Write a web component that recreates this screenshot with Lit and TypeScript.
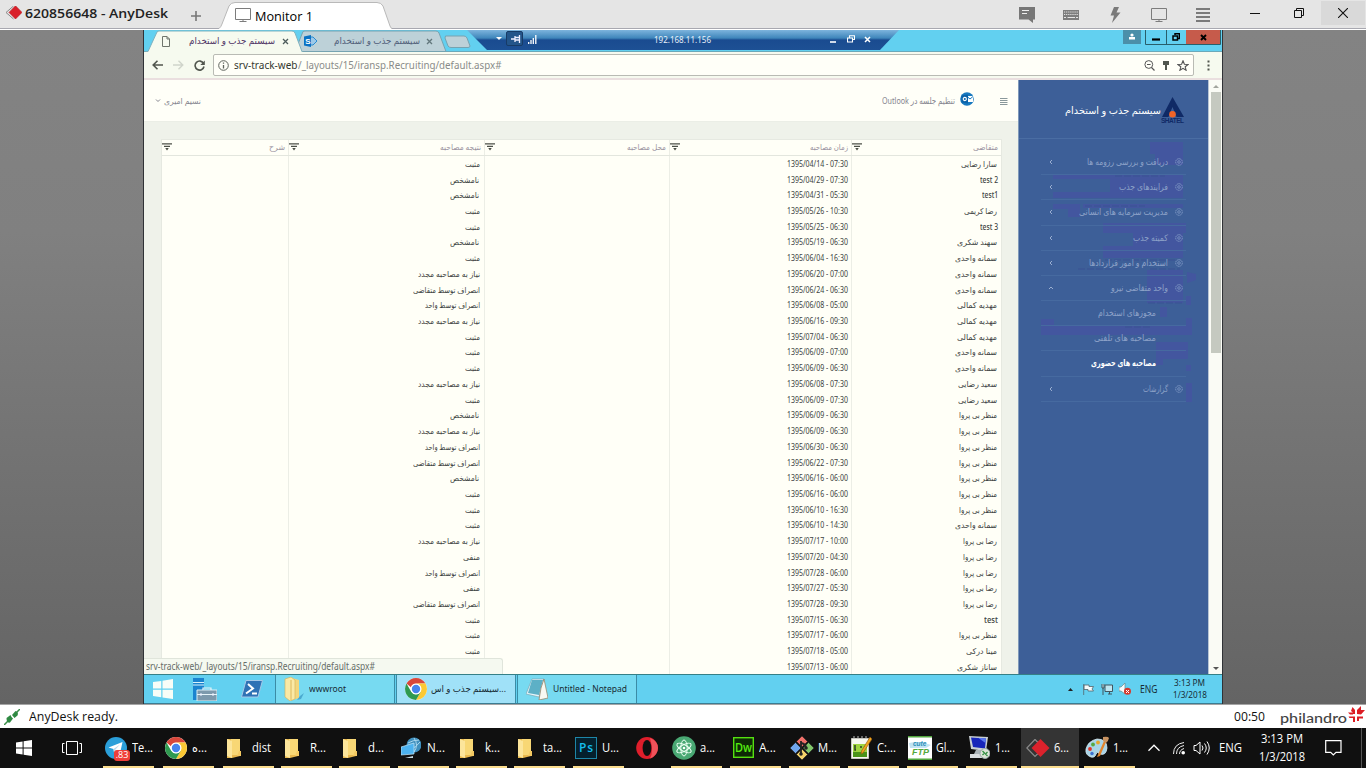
import { LitElement, html, css, svg, nothing } from "lit";
import { customElement, property } from "lit/decorators.js";
import { styleMap } from "lit/directives/style-map.js";

/** One line of text condensed or stretched to a given width. */
@customElement("fit-text")
class FitText extends LitElement {
  @property() t = "";
  @property({ type: Number }) w = 10;
  @property({ type: Boolean }) rtl = false;
  static styles = css`
    :host { display: block; direction: ltr; white-space: nowrap; flex: none; }
    .box { display: block; }
    .run { display: inline-block; transform-origin: 0 50%; white-space: pre; }
  `;
  render() {
    return html`<span class="box" style=${styleMap({ width: `${this.w}px` })}><span class="run" dir=${this.rtl ? "rtl" : "ltr"}>${this.t}</span></span>`;
  }
  updated() {
    const run = this.renderRoot.querySelector<HTMLElement>(".run")!;
    run.style.transform = "none";
    const n = run.getBoundingClientRect().width;
    if (n) run.style.transform = `scaleX(${this.w / n})`;
  }
}

const fit = (t: string, w: number, cls = "", rtl = false) =>
  html`<fit-text class=${cls} .t=${t} .w=${w} .rtl=${rtl}></fit-text>`;
const fa = (t: string, w: number, cls = "") => fit(t, w, cls, true);
const ico = (w: number, h: number, body: unknown, cls = "") =>
  html`<svg class=${cls} width=${w} height=${h} viewBox="0 0 ${w} ${h}">${body}</svg>`;

const chrome = svg`
  <circle cx="11" cy="11" r="11" fill="#fff"/>
  <path d="M1.5 5.5A11 11 0 0 1 20.5 5.5H11A5.5 5.5 0 0 0 5.9 9.2Z" fill="#d8473b"/>
  <path d="M20.5 5.5A11 11 0 0 1 11 22L15.8 13.6A5.5 5.5 0 0 0 11 5.5Z" fill="#fbc934"/>
  <path d="M1.5 5.5A11 11 0 0 0 11 22L15.8 13.7A5.5 5.5 0 0 1 6.2 13.7Z" fill="#2f9a50"/>
  <circle cx="11" cy="11" r="5.2" fill="#fff"/><circle cx="11" cy="11" r="4.2" fill="#4684ee"/>`;
const windows = svg`<path d="M0 2.4L6.6 1.5V7.5H0ZM7.6 1.3L16 0V7.5H7.6ZM0 8.5H6.6V14.5L0 13.6ZM7.6 8.5H16V16L7.6 14.7Z" fill="currentColor"/>`;
const folder = svg`<path d="M0 1H13V18L5 20H0Z" fill="#e9b84d"/><path d="M4 1H13V17H4Z" fill="#f8d775"/><path d="M0 1L5 3V20L0 18Z" fill="#fce59b"/><path d="M12 13h2v5h-4z" fill="#f4c962"/>`;
const funnel = ico(10, 8, svg`<path d="M0 .8H10M2 3.3H8M3.7 5.5H6.3" stroke="#4c5048" stroke-width="1.2"/><path d="M3.5 5.5H6.5L5 7.5Z" fill="#4c5048"/>`);
const diamond = svg`<path d="M8.5 1L1 7.5L8.5 14" fill="none" stroke="#8a8a8a"/><path d="M10.5 .8L17 7.4L10.5 14L4 7.4Z" fill="#d9202a" stroke="#b8151e" stroke-width=".6"/>`;
const monitor = svg`<path d="M.5 .5H15.5V11.5H.5ZM8 11.5V13.5M4.5 13.5H11.5" fill="none" stroke="#7c7c7c"/>`;

type Row = [string, string, string];
const P = "مثبت", U = "نامشخص", N = "نیاز به مصاحبه مجدد", Q = "انصراف توسط متقاضی", V = "انصراف توسط واحد", M = "منفی";
const A = "سمانه واحدی", B = "مهدیه کمالی", C = "سعید رضایی", D = "منظر بی پروا", E = "رضا بی پروا";
const ROWS: Row[] = [
  ["سارا رضایی", "04/14 - 07:30", P], ["test 2", "04/29 - 07:30", U], ["test1", "04/31 - 05:30", U],
  ["رضا کریمی", "05/26 - 10:30", P], ["test 3", "05/25 - 06:30", P], ["سهند شکری", "05/19 - 06:30", U],
  [A, "06/04 - 16:30", P], [A, "06/20 - 07:00", N], [A, "06/24 - 06:30", Q], [B, "06/08 - 05:00", V],
  [B, "06/16 - 09:30", N], [B, "07/04 - 06:30", P], [A, "06/09 - 07:00", P], [A, "06/09 - 06:30", P],
  [C, "06/08 - 07:30", N], [C, "06/09 - 07:30", P], [D, "06/09 - 06:30", U], [D, "06/09 - 06:30", N],
  [D, "06/30 - 06:30", V], [D, "06/22 - 07:30", Q], [D, "06/16 - 06:00", U], [D, "06/16 - 06:00", P],
  [D, "06/10 - 16:30", P], [A, "06/10 - 14:30", P], [E, "07/17 - 10:00", N], [E, "07/20 - 04:30", M],
  [E, "07/28 - 06:00", V], [E, "07/27 - 05:30", M], [E, "07/28 - 09:30", Q], ["test", "07/15 - 06:30", P],
  [D, "07/17 - 06:00", P], ["مینا درکی", "07/18 - 05:00", P], ["ساناز شکری", "07/13 - 06:00", ""],
];
const WIDTHS: Record<string, number> = {
  [P]: 15, [U]: 29, [N]: 62, [Q]: 67, [V]: 55, [M]: 17, [A]: 42, [B]: 40, [C]: 39, [D]: 38, [E]: 34,
  "سارا رضایی": 36, "test 2": 18, test1: 16, "رضا کریمی": 33, "test 3": 18, "سهند شکری": 40, test: 14,
  "مینا درکی": 31, "ساناز شکری": 40,
};
const MENU: { t: string; w: number; k?: string }[] = [
  { t: "دریافت و بررسی رزومه ها", w: 81 }, { t: "فرایندهای جذب", w: 49 }, { t: "مدیریت سرمایه های انسانی", w: 89 },
  { t: "کمیته جذب", w: 35 }, { t: "استخدام و امور قراردادها", w: 79 }, { t: "واحد متقاضی نیرو", w: 57, k: "open" },
  { t: "مجوزهای استخدام", w: 58, k: "sub" }, { t: "مصاحبه های تلفنی", w: 62, k: "sub" },
  { t: "مصاحبه های حضوری", w: 65, k: "sub on" }, { t: "گزارشات", w: 25 },
];

/** The recruiting site shown inside the remote browser. */
@customElement("recruit-page")
class RecruitPage extends LitElement {
  static styles = css`
    :host { display: grid; grid-template-columns: 874px 191px 13px; height: 594px; overflow: hidden; background: #eff2ea; font: 8px/12px "Noto Sans", "DejaVu Sans", sans-serif; }
    svg { display: block; flex: none; }
    .top { display: grid; grid-template-columns: 11px 9px 1fr; align-items: center; height: 42px; background: #fffff8; color: #85858f; border-bottom: 1px solid #ebeee6; box-sizing: border-box; }
    .main { min-width: 0; overflow: hidden; }
    .table { margin: 17px 0 0 17px; width: 841px; background: #fffff7; border: 1px solid #e6e9e1; box-sizing: border-box; }
    .row { display: grid; grid-template-columns: 127px 196px 185px 182px 1fr; height: 15.73px; color: #3c3f41; }
    .head { height: 16px; color: #9a93a0; border-bottom: 1px solid #e3e6de; box-sizing: border-box; }
    .cell { display: flex; align-items: center; justify-content: flex-end; border-right: 1px solid #eceee6; padding: 0 4px 0 0; }
    .cell:last-child { border-right: 0; }
    .cell .date, .cell .lat { margin-right: -1px; }
    .lat { font-weight: 500; }
    .head .cell { justify-content: space-between; padding: 0 3px 1px 0; }
    .u { margin-right: 1px; }
    .side { background: #3d5f98; border-left: 1px solid #7f99ba; border-right: 1px solid #b8c5d4; box-sizing: border-box; color: #8da2c8; position: relative; overflow: hidden; }
    .noise { position: absolute; inset: 0; }
    .brand { display: flex; height: 59px; border-bottom: 1px solid #4a6da3; box-sizing: border-box; padding: 17px 0 0 46px; color: #fff; font-size: 10px; position: relative; }
    .brandname { padding-top: 7px; line-height: 13px; font-weight: 500; }
    .menu { padding: 11px 22px 0 22px; position: relative; }
    .item { display: grid; grid-template-columns: 20px 1fr 18px; align-items: center; height: 25.18px; border-bottom: 1px solid #466aa0; box-sizing: border-box; font-size: 9px; }
    .item svg { justify-self: end; margin-right: 3px; }
    .item svg.chev { justify-self: center; margin-right: 0; }
    .lab { justify-self: end; }
    .sub { grid-template-columns: 20px 1fr 30px; }
    .sub.on { color: #fff; font-weight: 700; }
    .scroll { background: #fafbf5; display: flex; flex-direction: column; align-items: center; justify-content: space-between; padding: 4px 0 3px; box-sizing: border-box; }
    .thumb { width: 10px; height: 261px; background: #c5c9c0; margin-top: 4px; }
    .upper { display: flex; flex-direction: column; align-items: center; }
  `;
  private head(t: string, w: number) {
    return html`<div class="cell">${funnel}${fa(t, w)}</div>`;
  }
  render() {
    const gear = ico(8, 8, svg`<circle cx="4" cy="4" r="3.3" fill="none" stroke="#7f98c4" stroke-width="1" stroke-dasharray="1.6 .6"/><circle cx="4" cy="4" r="1.3" fill="none" stroke="#7f98c4" stroke-width=".8"/>`);
    return html`
      <div class="main">
        <div class="top">
          <i></i>${ico(6, 5, svg`<path d="M1 1.5L3 3.5L5 1.5" fill="none" stroke="#85858f"/>`)}
          ${fa("نسیم امیری", 37)}
        </div>
        <div class="table">
          <div class="row head">
            ${this.head("شرح", 16)}${this.head("نتیجه مصاحبه", 41)}${this.head("محل مصاحبه", 39)}${this.head("زمان مصاحبه", 38)}${this.head("متقاضی", 25)}
          </div>
          ${ROWS.map(([n, d, r]) => html`<div class="row">
            <div class="cell"></div>
            <div class="cell">${r ? fa(r, WIDTHS[r], r === U ? "u" : "") : nothing}</div>
            <div class="cell"></div>
            <div class="cell">${fit(`1395/${d}`, 61, "date")}</div>
            <div class="cell">${n.startsWith("test") ? fit(n, WIDTHS[n], "lat") : fa(n, WIDTHS[n])}</div>
          </div>`)}
        </div>
      </div>
      <div class="side">
        <svg class="noise" width="189" height="594" viewBox="1019 80 189 594" fill="#43569f">
          <path d="M1150 142h33v23h-28v-11h-5ZM1053 174h130v5h-130ZM1110 179h73v13h-73ZM1053 192h130v6h-130ZM1053 204h27v13h-12v-8h-15ZM1083 204h100v4h-100ZM1103 223h83v10h-83ZM1133 233h50v13h-50ZM1103 246h80v12h-80ZM1147 270h36v33h-36ZM1187 272l9 2v6l-9 3ZM1186 296h5v9h-5ZM1160 307h7v10h-7ZM1041 319h13v6h138v10h-151ZM1186 318h6v7h-6ZM1156 342h32v17h-25v6h-7ZM1186 365h5v6h-5ZM1186 383h6v19h-6Z"/>
          <path d="M1115 176h50M1150 269h30M1148 303h35M1125 327h25M1078 269h50M1085 206h60M1105 260h70" stroke="#3b5293" stroke-dasharray="7 2"/>
        </svg>
        <div class="brand">
          ${fa("سیستم جذب و استخدام", 96, "brandname")}
          ${ico(24, 28, svg`<path d="M11.5 0L23 20H15.5L11.5 10L7.5 20H1Z" fill="#102a66"/><circle cx="11.5" cy="17.3" r="3.3" fill="#f06428"/><text x="0" y="26.3" font-family="Liberation Sans" font-weight="700" font-size="6.5" textLength="23" fill="#102a66">SHATEL</text>`)}
        </div>
        <div class="menu">
          ${MENU.map((m) => html`<div class="item ${m.k ?? ""}">
            ${m.k?.startsWith("sub") ? html`<i></i>` : ico(6, 6, m.k ? svg`<path d="M1 4L3 2L5 4" fill="none" stroke="#9aaed0"/>` : svg`<path d="M4 1L2 3L4 5" fill="none" stroke="#9aaed0"/>`, "chev")}
            ${fa(m.t, m.w, "lab")}
            ${m.k?.startsWith("sub") ? nothing : gear}
          </div>`)}
        </div>
      </div>
      <div class="scroll">
        <div class="upper">${ico(6, 4, svg`<path d="M0 4L3 1L6 4Z" fill="#a2a59e"/>`)}<div class="thumb"></div></div>
        ${ico(6, 4, svg`<path d="M0 0L3 3L6 0Z" fill="#555"/>`)}
      </div>`;
  }
}

/** Header shortcut of the site: the meeting link, Outlook badge and menu toggle. */
@customElement("meeting-link")
class MeetingLink extends LitElement {
  static styles = css`
    :host { display: flex; align-items: center; height: 41px; color: #85858f; font: 9px/12px "Noto Sans", "DejaVu Sans", sans-serif; }
    svg { flex: none; }
    .b { margin: -4px 26px 0 5px; }
  `;
  render() {
    return html`${fa("تنظیم جلسه در Outlook", 73)}
      ${ico(14, 14, svg`<circle cx="7" cy="7" r="6.8" fill="#1879bf"/><path d="M7 4h6v6H7Z" fill="#fff"/><path d="M7 4.5l3 2.5l3-2.5" fill="none" stroke="#1879bf"/><path d="M1.5 3.5L8 2.5V11.5L1.5 10.5Z" fill="#0b62a8"/><circle cx="4.8" cy="7" r="1.6" fill="none" stroke="#fff" stroke-width="1.1"/>`, "b")}
      ${ico(8, 8, svg`<path d="M0 1.5H7.500M0 3.500H7.500M0 5.500H7.500M0 7.500H7.500" stroke="#7d8c90" stroke-width=".9"/>`)}`;
  }
}

/** The remote machine: browser window plus its own taskbar. */
@customElement("remote-desktop")
class RemoteDesktop extends LitElement {
  static styles = css`
    :host { display: block; width: 1078px; height: 674px; font: 9px/14px "Noto Sans", "DejaVu Sans", sans-serif; overflow: hidden; position: relative; }
    svg { display: block; flex: none; }
    .strip { height: 22px; background: #62d0f0; position: relative; }
    .shapes { position: absolute; inset: 0; }
    .tabs { display: grid; position: relative; height: 22px; align-items: center; grid-template-columns: 18px 27px 86px 7px 22px 30px 86px 6px 64px 17px 17px 17px 113px 57px 113px 18px 18px 15px 247px 19px 4px 21px 20px 34px; }
    .tabs .c { justify-self: center; }
    .tabs .r { justify-self: center; margin-bottom: 4px; }
    .tabs .h { justify-self: center; margin-bottom: 8px; }
    .tabs .a { color: #4f3566; }
    .tabs .b { color: #51607a; }
    .tabs .ip { color: #e8f0fa; margin-bottom: 3px; }
    .tools { height: 28px; background: #f6faef; display: grid; grid-template-columns: 8px 21px 21px 19px 981px 28px; align-items: center; border-bottom: 2px solid #eadfdf; box-sizing: border-box; }
    .omni { height: 22px; border: 1px solid #b9bbb4; border-radius: 2px; background: #fffff8; display: flex; align-items: center; box-sizing: border-box; padding: 0 4px; color: #898b88; font-size: 11.5px; line-height: 18px; }
    .omni .host { color: #33372f; margin-left: 5px; }
    .sp { flex: 1; }
    .omni svg + svg { margin-left: 6px; }
    .tools > svg { justify-self: center; }
    .tools > .back { justify-self: start; }
    .bar { display: grid; grid-template-columns: 38px 46px 47px 120px 1px 120px 1px 120px 1fr 26px 11px 7px 11px 7px 12px 9px 18px 15px 33px 16px; align-items: center; height: 30px; background: #62d0f0; border-top: 1px solid #357f86; border-bottom: 1px solid #3b7c92; box-sizing: border-box; color: #172c35; }
    .bar > svg { justify-self: center; }
    .btn { height: 28px; border: 1px solid #3b8ca6; border-width: 0 1px; background: #77daf1; display: flex; align-items: center; box-sizing: border-box; padding-left: 8px; gap: 5px; }
    .btn.on { background: #a0e1f8; gap: 4px; }
    .when { display: flex; flex-direction: column; align-items: center; line-height: 12px; font-size: 9.5px; }
    .eng { font-size: 10px; }
    .tip { position: absolute; left: 0; bottom: 30px; width: 359px; height: 16px; background: #f5f9f0; border: 1px solid #e0e5db; border-width: 1px 1px 0 0; border-radius: 0 3px 0 0; box-sizing: border-box; padding-left: 2px; color: #666d68; font-size: 10px; line-height: 15px; }
    .meet { position: absolute; top: 50px; left: 738px; }
  `;
  render() {
    const x = (c: string) => ico(7, 7, svg`<path d="M1 1L6 6M6 1L1 6" stroke=${c} stroke-width="1.3"/>`);
    const e = html`<i></i>`;
    return html`
      <div class="strip">
        <svg class="shapes" width="1078" height="22" viewBox="144 30 1078 22">
          <defs><linearGradient id="r" x1="0" y1="0" x2="0" y2="1"><stop offset="0" stop-color="#7db4dd"/><stop offset=".4" stop-color="#3f86bb"/><stop offset=".5" stop-color="#1a4b90"/><stop offset="1" stop-color="#1d5094"/></linearGradient></defs>
          <path d="M144 51.5H1222" stroke="#6ba9ba"/>
          <path d="M295 51.5L303 31.5Q304 31 305 31H436Q438 31 439 33L446 51.5Z" fill="#bdd1d8" stroke="#76a3b1"/>
          <path d="M144 52.5L148 51.5L157 32Q158 31 159 31H292Q294 31 295 33L302 51.5L303 53H144Z" fill="#f6faef" stroke="#7eb2bf"/>
          <path d="M445.500 36H464Q466 36 467 38L470 46Q470 47.500 468 47.500H451Q449 47.500 448 46L445 38Z" fill="#bdd1d8" stroke="#76a3b1"/>
          <path d="M467 30L487 50H880L899 30Z" fill="url(#r)"/>
          <rect x="506.500" y="31.500" width="16" height="14" rx="1.500" fill="#23558a" stroke="#173b66"/>
          <rect x="1123" y="30" width="18" height="14" fill="#4b8fa9"/>
          <path d="M1145.500 30V44.500H1220.500V30M1166.500 30V44" fill="none" stroke="#285f6b"/>
          <rect x="1186" y="30" width="34" height="14" fill="#c65b4b"/>
        </svg>
        <div class="tabs">
          ${e}${ico(8, 11, svg`<path d="M.5 .5H5L7.500 3V10.500H.5ZM5 .5V3H7.500" fill="none" stroke="#6f756c"/>`)}
          ${fa("سیستم جذب و استخدام", 86, "a")}${e}${x("#4d5c5c")}
          ${ico(14, 12, svg`<path d="M6 2L9 2L13 6L9 10H6Z" fill="#9cc9e9" stroke="#2b8bd0"/><path d="M0 1.500L7 0V12L0 10.500Z" fill="#0a72c4"/><text x="1.300" y="8.800" font-family="Liberation Sans" font-size="8" font-weight="700" fill="#fff">S</text>`)}
          ${fa("سیستم جذب و استخدام", 86, "b")}${e}${x("#62777c")}
          ${ico(6, 6, svg`<path d="M0 1H6L3 4Z" fill="#fff"/>`, "r")}
          ${ico(10, 8, svg`<path d="M0 4H4M4 1V7M4 2.500H8M4 5H8M8.500 0V8" stroke="#eef" stroke-width="1.300"/>`, "r")}
          ${ico(9, 9, svg`<path d="M.7 9V7M3 9V5M5.300 9V3M7.800 9V0" stroke="#fff" stroke-width="1.300"/>`, "r")}${e}
          ${fit("192.168.11.156", 57, "ip")}${e}
          ${ico(6, 8, svg`<path d="M0 7H6" stroke="#fff" stroke-width="1.600"/>`, "r")}
          ${ico(8, 8, svg`<path d="M2.500 3V.8H7.500V4.500H5.500M.5 3H5.500V7H.5Z" fill="none" stroke="#fff" stroke-width="1.100"/>`, "r")}
          ${ico(7, 7, svg`<path d="M1 1L6 6M6 1L1 6" stroke="#fff" stroke-width="1.500"/>`, "r")}${e}
          ${ico(8, 8, svg`<circle cx="4" cy="2" r="1.600" fill="#fff"/><path d="M1 4H7V6.500H1Z" fill="#fff"/>`, "h")}${e}
          ${ico(8, 8, svg`<path d="M0 6.500H8" stroke="#000" stroke-width="2.200"/>`, "h")}
          ${ico(8, 8, svg`<path d="M1 3H5.500V7H1ZM3 2V.8H7.500V5.500H6" fill="none" stroke="#000" stroke-width="1.500"/>`, "h")}
          ${ico(7, 7, svg`<path d="M1 1L6 6M6 1L1 6" stroke="#000" stroke-width="1.900"/>`, "h")}
        </div>
      </div>
      <div class="tools">
        ${e}${ico(11, 10, svg`<path d="M11 5H1M5.500 .7L1.200 5L5.500 9.300" fill="none" stroke="#51564e" stroke-width="1.600"/>`, "back")}
        ${ico(11, 10, svg`<path d="M0 5H10M5.500 .7L9.800 5L5.500 9.300" fill="none" stroke="#d0d5cb" stroke-width="1.400"/>`, "back")}
        ${ico(11, 11, svg`<path d="M9.600 3.500A4.500 4.500 0 1 0 10 6.500" fill="none" stroke="#51564e" stroke-width="1.600"/><path d="M10.800 .5V5H6.300Z" fill="#51564e"/>`, "back")}
        <div class="omni">
          ${ico(11, 11, svg`<circle cx="5.500" cy="5.500" r="4.800" fill="none" stroke="#5e635c"/><path d="M5.500 5V8.500M5.500 2.500V3.800" stroke="#5e635c" stroke-width="1.300"/>`)}
          ${fit("srv-track-web", 63.5, "host")}${fit("/_layouts/15/iransp.Recruiting/default.aspx#", 203.5)}
          <div class="sp"></div>
          ${ico(11, 11, svg`<circle cx="4.800" cy="4.500" r="3.900" fill="none" stroke="#555"/><path d="M3 4.500H6.600M7.500 7.500L10.500 10.500" stroke="#555" stroke-width="1.200"/>`)}
          ${ico(10, 11, svg`<path d="M2 1H8V5H2Z" fill="#51564e"/><path d="M5 4V10" stroke="#51564e" stroke-width="2"/>`)}
          ${ico(12, 11, svg`<path d="M6 .8L7.400 4.200L11 4.500L8.200 6.800L9.100 10.300L6 8.400L2.900 10.300L3.800 6.800L1 4.500L4.600 4.200Z" fill="none" stroke="#555" stroke-width="1.100"/>`)}
        </div>
        ${ico(3, 11, svg`<path d="M.5 .5h2v2h-2ZM.5 4.500h2v2h-2ZM.5 8.500h2v2h-2Z" fill="#51564e"/>`)}
      </div>
      <recruit-page></recruit-page>
      <meeting-link class="meet"></meeting-link>
      <div class="tip">${fit("srv-track-web/_layouts/15/iransp.Recruiting/default.aspx#", 229)}</div>
      <div class="bar">
        <svg width="20" height="20" viewBox="0 0 16 16" color="#f8fdf7">${windows}</svg>
        ${ico(24, 23, svg`<path d="M0 0H11V22H0Z" fill="#1b84cf"/><path d="M0 4.500H11M0 7H11" stroke="#d8f2fb" stroke-width="1.200"/><path d="M4 12H24V23H4Z" fill="#7d99ac" stroke="#d8eef5"/><path d="M10 12V10H18V12M4 16.500H24" fill="none" stroke="#e6f3f8" stroke-width="1.200"/><path d="M8 15v3M20 15v3" stroke="#eef"/>`)}
        ${ico(22, 18, svg`<path d="M5 .5H21.500L17 17H.5Z" fill="#2f72b5" stroke="#a4c9e8"/><path d="M7 4L12 8.500L5 13.500M11 13.500H16" fill="none" stroke="#fff" stroke-width="2"/>`)}
        <div class="btn">${ico(20, 24, svg`<path d="M8 1L15 3V21L8 23Z" fill="#f3d67c"/><path d="M1 2L7 0L11 3V22L6 24L1 20Z" fill="#fae9a5" stroke="#d2ae55" stroke-width=".6"/><path d="M7 3V23" stroke="#dcb85c"/><path d="M16 19l4-3-3 6-4 1Z" fill="#4aa9cf"/>`)}${fit("wwwroot", 37)}</div>${e}
        <div class="btn on">${ico(22, 22, chrome)}${fit("سیستم جذب و اس...", 75)}</div>${e}
        <div class="btn">${ico(22, 22, svg`<path d="M6 1H18L13 19L0 16Z" fill="#e6f5fa" stroke="#7aa7b5" stroke-width=".7"/><path d="M6 2H17L13 17L2 15Z" fill="#5db0c6"/><path d="M18 1L22 20L13 22L15 10Z" fill="#f8f8f2" stroke="#927d5d" stroke-width=".7"/>`)}${fit("Untitled - Notepad", 74)}</div>
        ${e}${ico(5, 4, svg`<path d="M0 4L2.500 1L5 4Z" fill="#222"/>`)}${ico(11, 11, svg`<path d="M.7 0V11M1 1H6V2.500H10.500L9 5L10.500 7H5V5.500H1Z" fill="#f5fbfb" stroke="#54636a" stroke-width=".8"/>`)}${e}
        ${ico(12, 11, svg`<path d="M4 1H11.500V7.500H4ZM7 10H11M8.500 7.500V10M1 0V4H3V0M2 4V11" fill="#bfe7f2" stroke="#41555e" stroke-width="1"/>`)}${e}
        ${ico(12, 12, svg`<path d="M0 4H2L6 0V11L2 8H0Z" fill="#f7fbfb" stroke="#688" stroke-width=".7"/><circle cx="8.500" cy="8.300" r="3.500" fill="#d5382c"/><path d="M7 7L10 10M10 7L7 10" stroke="#fff"/>`)}${e}
        ${fit("ENG", 17.5, "eng")}${e}
        <div class="when">${fit("3:13 PM", 31)}${fit("1/3/2018", 34)}</div>
      </div>`;
  }
}

/** Windows taskbar of the local machine. */
@customElement("local-taskbar")
class LocalTaskbar extends LitElement {
  static styles = css`
    :host { display: grid; grid-template-columns: 48px 55px 60px 60px 58px 58px 59px 58px 58px 59px 59px 39px 59px 59px 59px 59px 59px 55px 63px 63px 14px 11px 21px 26px 23px 17px 45px 21px 18px 1fr; align-items: center; height: 40px; background: #101010; color: #fff; font: 12px/16px "Open Sans", "DejaVu Sans", sans-serif; }
    svg { display: block; flex: none; }
    .mid { justify-self: center; }
    .tv { justify-self: end; margin-right: 21px; }
    .task { display: flex; height: 40px; width: 51px; border-bottom: 2px solid #fbdd8e; box-sizing: border-box; align-items: center; gap: 3px; padding-top: 1px; }
    .task.wide { width: 58px; padding-left: 4px; background: #343434; }
    .task.bare { border-color: transparent; padding-left: 2px; }
    .slot { width: 26px; flex: none; display: flex; justify-content: center; position: relative; }
    .fold { padding-right: 4px; width: 22px; }
    .badge { position: absolute; left: 11px; bottom: -2px; width: 16px; height: 11px; background: #ef3e38; border-radius: 3px; color: #fff; font-size: 9px; line-height: 10px; text-align: center; }
    .when { display: flex; flex-direction: column; align-items: center; line-height: 18px; padding-bottom: 1px; }
    .edge { justify-self: end; width: 1px; height: 40px; background: #555; margin-right: 4px; }
  `;
  render() {
    const task = (icon: unknown, t = "", w = 0, k = "", badge = "") => html`<div class="task ${k}">
      <div class="slot ${icon === folder ? "fold" : ""}">${icon === folder ? ico(14, 20, folder) : icon}${badge ? html`<span class="badge">${badge}</span>` : nothing}</div>${t ? fit(t, w) : nothing}</div>`;
    return html`
      <svg class="mid" width="16" height="16" viewBox="0 0 16 16">${windows}</svg>
      ${ico(20, 14, svg`<path d="M4.500 .5H15.500V13.500H4.500ZM2.500 2.500H.5V11.500H2.500M17.500 2.500H19.500V11.500H17.500" fill="none" stroke="#fff"/>`, "tv")}
      ${task(ico(22, 22, svg`<circle cx="11" cy="11" r="11" fill="#2b9fd9"/><path d="M3.500 10.500L17.500 5L15 16.500L11 13.500L9 15.500L8.500 12Z" fill="#fff"/><path d="M8.500 12L15 7.500L10 13L9 15.500Z" fill="#bcd9ea"/>`), "Te...", 21, "", ".83")}
      ${task(ico(22, 22, chrome), "ه...", 15)}
      ${task(folder, "dist", 19)}${task(folder, "R...", 16)}${task(folder, "d...", 16)}
      ${task(ico(20, 22, svg`<circle cx="13" cy="8" r="7.500" fill="#3f8fbd"/><path d="M7 6Q12 3 18 3M9 12Q15 11 19 5M13 1Q18 8 13 15" stroke="#a9d7ee" fill="none"/><path d="M0 10L13 6V17L0 18Z" fill="#4cb2ef" stroke="#c4e6f8" stroke-width=".7"/><path d="M4 21L12 19V21Z" fill="#c8dbe3"/>`), "N...", 18)}
      ${task(folder, "k...", 15)}${task(folder, "ta...", 19)}
      ${task(ico(22, 22, svg`<rect x=".5" y=".5" width="21" height="21" fill="#04202d" stroke="#1d86a8"/><text x="4" y="15" font-family="Open Sans" font-weight="600" font-size="12" textLength="14" fill="#14bfee">Ps</text>`), "U...", 17)}
      ${task(ico(22, 22, svg`<ellipse cx="11" cy="11" rx="10.800" ry="11" fill="#df1e2b"/><path d="M14 1Q22 4 22 11Q22 18 14 21.500Q18 15 14 1" fill="#f0525a"/><ellipse cx="11" cy="11" rx="4.400" ry="8" fill="#101010"/>`), "", 0, "bare")}
      ${task(ico(24, 24, svg`<circle cx="12" cy="12" r="11.800" fill="#49a873"/><g fill="none" stroke="#eafff2" stroke-width="1"><ellipse cx="12" cy="12" rx="3.200" ry="8"/><ellipse cx="12" cy="12" rx="3.200" ry="8" transform="rotate(60 12 12)"/><ellipse cx="12" cy="12" rx="3.200" ry="8" transform="rotate(120 12 12)"/></g><circle cx="12" cy="12" r="1.300" fill="#fff"/>`), "a...", 15)}
      ${task(ico(21, 21, svg`<rect x=".7" y=".7" width="19.600" height="19.600" fill="#0d2a05" stroke="#55e010" stroke-width="1.400"/><text x="2" y="14.500" font-family="Open Sans" font-weight="600" font-size="12" textLength="17" lengthAdjust="spacingAndGlyphs" fill="#55ee10">Dw</text>`), "A...", 17)}
      ${task(ico(24, 24, svg`<g stroke="#222" stroke-width=".6"><path d="M12 0L17.500 5.500L12 11L6.500 5.500Z" fill="#f0706a"/><path d="M18.500 6.500L24 12L18.500 17.500L13 12Z" fill="#80c66a"/><path d="M5.500 6.500L11 12L5.500 17.500L0 12Z" fill="#70a6ee"/><path d="M12 13L17.500 18.500L12 24L6.500 18.500Z" fill="#f4d36a"/></g><path d="M11 5V18M11 7Q16 8 16 12" fill="none" stroke="#222" stroke-width="1.800"/><circle cx="16" cy="12" r="1.800" fill="#222"/><circle cx="11" cy="18" r="1.800" fill="#222"/>`), "M...", 19)}
      ${task(ico(21, 24, svg`<path d="M.5 2.500H17.500V22.500H.5Z" fill="#f6f7ef" stroke="#c8c8c0"/><path d="M2 8H16V21H2Z" fill="#9ed43e"/><path d="M2 16H16V21H2Z" fill="#4a9418"/><path d="M4 9V14H5M9 11h2M13 11h2" fill="none" stroke="#2b3f20" stroke-width="1.500"/><path d="M3 3V0M7 3V0M11 3V0M15 3V0" stroke="#bbb"/><path d="M19 1L21 3L12 17L10 18L10.500 15Z" fill="#f0a51d" stroke="#8d5411" stroke-width=".6"/>`), "C:...", 19)}
      ${task(ico(24, 24, svg`<path d="M0 0H24V24H0Z" fill="#fff"/><path d="M0 0H24V1.500H0ZM0 22.500H24V24H0Z" fill="#52a63e"/><path d="M1 7Q12 4 23 9L18 12H2Z" fill="#c2e4f3"/><text x="5" y="10" font-family="Liberation Sans" font-weight="700" font-style="italic" font-size="6.500" fill="#278db8">cute</text><text x="4" y="19" font-family="Liberation Sans" font-weight="700" font-style="italic" font-size="8.500" textLength="17" lengthAdjust="spacingAndGlyphs" fill="#55a83c">FTP</text>`), "Gl...", 19)}
      ${task(ico(22, 23, svg`<path d="M1 0L20 1L18 15L3 13Z" fill="#c9d0d4"/><path d="M3 1.500L18 2.500L17 12.500L5 11Z" fill="#1726ba"/><path d="M10 1.800L18 2.500L17.500 7Z" fill="#5a78f0"/><path d="M8 14L6 18H16L13 14Z" fill="#aab2b6"/><path d="M2 18H14V22H2Z" fill="#d8dcde"/><circle cx="17" cy="17.500" r="5" fill="#dce5d8" stroke="#9aa"/><path d="M14.500 15l2 2-2 2M19.500 16l-2 2 2 2" fill="none" stroke="#2c8c3c" stroke-width="1.200"/>`), "1...", 15)}
      ${task(ico(24, 20, svg`<path d="M9 1.500L.8 10L9 18.500L12 15.500M9 1.500L12 4.500" fill="none" stroke="#8a8a8a" stroke-width="1.200"/><path d="M14.500 1L23.500 10L14.500 19L5.500 10Z" fill="#dc222c"/>`), "6...", 15, "wide")}
      ${task(ico(24, 24, svg`<path d="M12 3Q22 3 22 12Q21 20 15 18Q12 15 11 18Q10 22 6 21Q0 19 1 13Q3 5 12 3Z" fill="#a9d5e8" stroke="#dceef5" stroke-width=".8"/><circle cx="5" cy="13" r="1.900" fill="#e03427"/><circle cx="8" cy="8.500" r="1.900" fill="#58a842"/><circle cx="13" cy="6.500" r="1.900" fill="#e8a62c"/><circle cx="7" cy="17.500" r="1.700" fill="#3c72cf"/><path d="M19 5L12 21L15 20L21 6Z" fill="#e1842b"/><path d="M18 1Q23 0 24 2Q23 6 21 7L18 5Z" fill="#c89362"/>`), "1...", 15)}
      ${ico(14, 8, svg`<path d="M1.500 6.700L7 1.200L12.500 6.700" fill="none" stroke="#fff" stroke-width="1.300"/>`)}
      <i></i>
      ${ico(14, 14, svg`<path d="M1.500 13Q1.500 3 12 1.500M4.500 13Q4.500 6 12 4.500M7.500 13Q7.500 9 12 7.500" fill="none" stroke="#eee"/><circle cx="11.200" cy="11.800" r="1.800" fill="#fff"/>`)}
      ${html`<svg width="18" height="14" viewBox="7 0 18 14"><path d="M8 4.500H10L14 1V13L10 9.500H8ZM16 4.500Q18 7 16 9.500M18.500 2.500Q22 7 18.500 11.500M21 .5Q25.500 7 21 13.500" fill="none" stroke="#fff"/></svg>`}
      ${fit("ENG", 23)}<i></i>
      <div class="when">${fit("3:13 PM", 42)}${fit("1/3/2018", 46)}</div><i></i>
      ${ico(17, 16, svg`<path d="M.7 .7H16V12.300H11L8.300 15L5.700 12.300H.7Z" fill="none" stroke="#fff" stroke-width="1.200"/>`)}
      <div class="edge"></div>`;
  }
}

@customElement("app-root")
class AppRoot extends LitElement {
  static styles = css`
    :host { display: block; width: 1366px; height: 768px; overflow: hidden; font: 13px/18px "Open Sans", "DejaVu Sans", sans-serif; color: #111; }
    svg { display: block; flex: none; }
    .title { height: 30px; background: #e5e5e5; position: relative; }
    .tabshape { position: absolute; inset: 0; }
    .titlebar { position: relative; display: grid; grid-template-columns: 5px 20px 143px 23px 44px 20px 58px 706px 44px 46px 42px 45px 54px 44px 27px 44px 1px; align-items: center; height: 30px; }
    .name { font-weight: 600; color: #222; font-size: 13px; padding-bottom: 4px; }
    .tabname { color: #000; padding-top: 2px; }
    .ic { display: flex; align-items: center; }
    .up { margin-bottom: 4px; }
    .close { height: 24px; background: #d9d9d9; align-self: start; margin-top: 1px; display: flex; align-items: center; justify-content: center; }
    .stage { display: flex; justify-content: center; height: 674px; background: linear-gradient(#838383, #808080 30%, #646464); }
    .frame { border: 1px solid #303236; border-width: 0 1px; }
    .status { height: 24px; background: #fff; border-top: 1px solid #a5a5a5; box-sizing: border-box; display: grid; grid-template-columns: 4px 25px 89px 1116px 31px 15px 67px 19px; align-items: center; }
    .st { padding-bottom: 1px; }
    .logo { font: 500 14px/18px "Lato", sans-serif; color: #444; padding-top: 3px; }
    .mark { align-self: start; margin-top: 1px; }
  `;
  render() {
    return html`
      <div class="title">
        <svg class="tabshape" width="1366" height="30" viewBox="0 0 1366 30">
          <path d="M0 28.500H1366" stroke="#a8a8b0"/><path d="M0 29.500H1366" stroke="#fff"/>
          <path d="M219 28.500Q221 27 222 24L229 6Q231 2.500 235 2.500H377Q381 2.500 383 6L390 26Q391 28.500 392 28.500V30H219Z" fill="#fff"/>
          <path d="M219 28.500Q221 27 222 24L229 6Q231 2.500 235 2.500H377Q381 2.500 383 6L390 26Q391 28.500 392 28.500" fill="none" stroke="#b9b9b9"/>
        </svg>
        <div class="titlebar">
          <i></i><div class="ic">${html`<svg width="17" height="18" viewBox="0 1 17 18">${diamond}</svg>`}</div>
          ${fit("620856648 - AnyDesk", 143, "name")}
          <i></i>
          <div class="ic">${ico(10, 12, svg`<path d="M5 2V12M0 7H10" stroke="#777" stroke-width="1.600"/>`)}</div>
          ${ico(16, 14, monitor)}${fit("Monitor 1", 58, "tabname")}<i></i>
          ${ico(16, 16, svg`<path d="M0 0H16V12.500H14V16L9.500 12.500H0Z" fill="#777"/><path d="M3 3.500H10M3 6.500H8" stroke="#eee"/>`)}
          ${ico(16, 10, svg`<path d="M0 0H16V10H0Z" fill="#7d7d7d"/><path d="M1 2H15M1 4.500H15" stroke="#e5e5e5" stroke-width="1.200" stroke-dasharray="1.200 .9"/><path d="M1 7.500H3M4.500 7.500H12M13 7.500H15" stroke="#e5e5e5"/>`)}
          ${ico(12, 16, svg`<path d="M5 0H10L7.500 5.500H11.500L3 16L5 8.500H1.500Z" fill="#7a7a7a"/>`)}
          ${ico(16, 14, monitor)}
          ${ico(14, 14, svg`<path d="M0 1H14M0 5H14M0 9H14M0 13H14" stroke="#7a7a7a" stroke-width="1.800"/>`)}
          ${ico(10, 4, svg`<path d="M0 2.500H10" stroke="#111" stroke-width="1"/>`, "up")}
          ${ico(10, 13, svg`<path d="M.5 3.500H7.500V10.500H.5ZM2.500 3.500V1.500H9.500V8.500H7.500" fill="none" stroke="#111"/>`, "up")}
          <div class="close">${ico(10, 10, svg`<path d="M0 0L10 10M10 0L0 10" stroke="#111" stroke-width="1.100"/>`)}</div>
        </div>
      </div>
      <div class="stage"><div class="frame"><remote-desktop></remote-desktop></div></div>
      <div class="status">
        <i></i>${ico(16, 16, svg`<path d="M0 16L4 12M12 4L16 0" stroke="#3c8d4a" stroke-width="1.500"/><path d="M2.500 9L6.500 6L7.500 8L9 9.500L6 13.500Q2.500 14.500 2.500 9ZM8 6L11.500 2Q15 3 13.500 6.500L10.500 9Z" fill="#2f8a42"/>`)}
        ${fit("AnyDesk ready.", 89, "st")}<i></i>${fit("00:50", 31, "st")}<i></i>${fit("philandro", 67, "logo")}
        ${ico(18, 18, svg`<g fill="#dc1c24"><path d="M5.500 1L8 4V8H6V6.500L4 5ZM1 6.500H6V8.500H3ZM10 8V4L14 0V4H18L14 8.500ZM1.500 10.500H6V12H2.500ZM6 10.500H8V16H6ZM10 10.500H16V12.500H12V15H10Z"/></g>`, "mark")}
      </div>
      <local-taskbar></local-taskbar>`;
  }
}
